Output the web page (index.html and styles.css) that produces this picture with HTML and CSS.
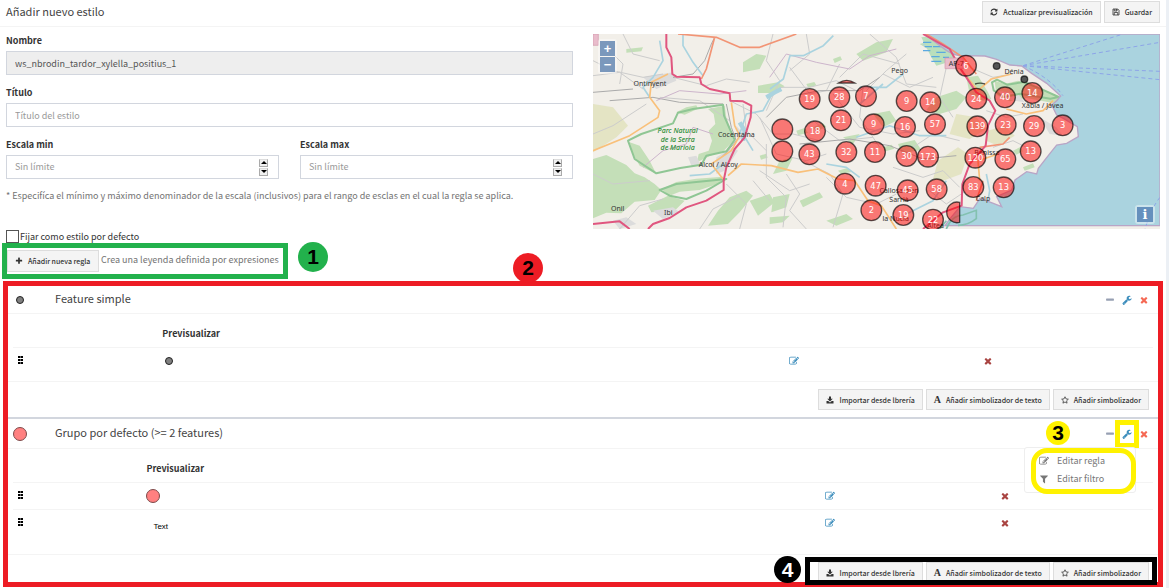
FILE: index.html
```html
<!DOCTYPE html>
<html lang="es">
<head>
<meta charset="utf-8">
<title>Añadir nuevo estilo</title>
<link rel="stylesheet" href="styles.css">
</head>
<body>
<svg class="defs" aria-hidden="true">
  <symbol id="i-refresh" viewBox="0 0 1792 1792"><path d="M1639 1056q0 5-1 7-64 268-268 434.5t-478 166.5q-146 0-282.5-55t-243.5-157l-129 129q-19 19-45 19t-45-19-19-45v-448q0-26 19-45t45-19h448q26 0 45 19t19 45-19 45l-137 137q71 66 161 102t187 36q134 0 250-65t186-179q11-17 53-117 8-23 30-23h192q13 0 22.5 9.5t9.5 22.5zm25-800v448q0 26-19 45t-45 19h-448q-26 0-45-19t-19-45 19-45l138-138q-148-137-349-137-134 0-250 65t-186 179q-11 17-53 117-8 23-30 23h-199q-13 0-22.5-9.5t-9.5-22.5v-7q65-268 270-434.5t480-166.5q146 0 284 55.5t245 156.5l130-129q19-19 45-19t45 19 19 45z"/></symbol>
  <symbol id="i-save" viewBox="0 0 16 16"><path fill="none" stroke="currentColor" stroke-width="1.6" d="M2 2h9.500l2.500 2.500v9.500h-12zM4.500 14v-5h7v5M4.500 2v4h5.500v-4"/><path d="M7.500 2h2v3h-2z"/></symbol>
  <symbol id="i-plus" viewBox="0 0 1792 1792"><path d="M1600 736v192q0 40-28 68t-68 28h-416v416q0 40-28 68t-68 28h-192q-40 0-68-28t-28-68v-416h-416q-40 0-68-28t-28-68v-192q0-40 28-68t68-28h416v-416q0-40 28-68t68-28h192q40 0 68 28t28 68v416h416q40 0 68 28t28 68z"/></symbol>
  <symbol id="i-minus" viewBox="0 0 1792 1792"><path d="M1600 736v192q0 40-28 68t-68 28h-1216q-40 0-68-28t-28-68v-192q0-40 28-68t68-28h1216q40 0 68 28t28 68z"/></symbol>
  <symbol id="i-close" viewBox="0 0 1792 1792"><path d="M1490 1322q0 40-28 68l-136 136q-28 28-68 28t-68-28l-294-294-294 294q-28 28-68 28t-68-28l-136-136q-28-28-28-68t28-68l294-294-294-294q-28-28-28-68t28-68l136-136q28-28 68-28t68 28l294 294 294-294q28-28 68-28t68 28l136 136q28 28 28 68t-28 68l-294 294 294 294q28 28 28 68z"/></symbol>
  <symbol id="i-wrench" viewBox="0 0 1792 1792"><path d="M448 1472q0-26-19-45t-45-19-45 19-19 45 19 45 45 19 45-19 19-45zm644-420l-682 682q-37 37-90 37-52 0-91-37l-106-108q-38-36-38-90 0-53 38-91l681-681q39 98 114.5 173.500t173.500 114.500zm634-435q0 39-23 106-47 134-164.500 217.500t-258.500 83.500q-185 0-316.500-131.500t-131.500-316.500 131.500-316.500 316.500-131.500q58 0 121.500 16.500t107.500 46.500q16 11 16 28t-16 28l-293 169v224l193 107q5-3 79-48.500t135.500-81 70.500-35.500q15 0 23.500 10t8.500 25z"/></symbol>
  <symbol id="i-edit" viewBox="0 0 1792 1792"><path d="M888 1184l116-116-152-152-116 116v56h96v96h56zm440-720q-16-16-33 1l-350 350q-17 17-1 33t33-1l350-350q17-17 1-33zm80 594v190q0 119-84.500 203.500t-203.500 84.500h-832q-119 0-203.500-84.500t-84.500-203.500v-832q0-119 84.500-203.500t203.500-84.500h832q63 0 117 25 15 7 18 23 3 17-9 29l-49 49q-14 14-32 8-23-6-45-6h-832q-66 0-113 47t-47 113v832q0 66 47 113t113 47h832q66 0 113-47t47-113v-126q0-13 9-22l64-64q15-15 35-7t20 29zm-96-738l288 288-672 672h-288v-288zm444 132l-92 92-288-288 92-92q28-28 68-28t68 28l152 152q28 28 28 68t-28 68z"/></symbol>
  <symbol id="i-filter" viewBox="0 0 1792 1792"><path d="M1595 295q17 41-14 70l-493 493v742q0 42-39 59-13 5-25 5-27 0-45-19l-256-256q-19-19-19-45v-486l-493-493q-31-29-14-70 17-39 59-39h1280q42 0 59 39z"/></symbol>
  <symbol id="i-download" viewBox="0 0 16 16"><path d="M6 1h4v4.500h3.500L8 11 2.500 5.500H6zM1 10h3.500L8 13l3.500-3H15v5H1z"/></symbol>
  <symbol id="i-star" viewBox="0 0 16 16"><path fill="none" stroke="currentColor" stroke-width="1.5" stroke-linejoin="round" d="M8 1.500l2 4.300 4.700.6-3.500 3.200.9 4.700L8 12l-4.100 2.300.9-4.700L1.300 6.400 6 5.800z"/></symbol>
  <symbol id="i-grip" viewBox="0 0 5 9"><path d="M0 0h2v2H0zM3 0h2v2H3zM0 3h2v2H0zM3 3h2v2H3zM0 6h2v2H0zM3 6h2v2H3z"/><path opacity=".6" d="M2 0h1v2H2zM2 3h1v2H2zM2 6h1v2H2z"/></symbol>
</svg>

<main class="card">
  <header class="card-head">
    <h1>Añadir nuevo estilo</h1>
    <div class="head-actions">
      <button class="btn" type="button"><svg class="icon"><use href="#i-refresh"/></svg>Actualizar previsualización</button>
      <button class="btn" type="button"><svg class="icon"><use href="#i-save"/></svg>Guardar</button>
    </div>
  </header>

  <div class="top">
    <form class="form">
      <div class="group">
        <label for="name">Nombre</label>
        <input class="field" id="name" type="text" value="ws_nbrodin_tardor_xylella_positius_1" readonly>
      </div>
      <div class="group">
        <label for="title">Título</label>
        <input class="field" id="title" type="text" placeholder="Título del estilo">
      </div>
      <div class="scales">
        <div class="group">
          <label for="min">Escala min</label>
          <div class="field spin-field"><input id="min" type="number" placeholder="Sin límite"><span class="spin"><button type="button" aria-label="Subir mínimo"></button><button type="button" class="down" aria-label="Bajar mínimo"></button></span></div>
        </div>
        <div class="group">
          <label for="max">Escala max</label>
          <div class="field spin-field"><input id="max" type="number" placeholder="Sin límite"><span class="spin"><button type="button" aria-label="Subir máximo"></button><button type="button" class="down" aria-label="Bajar máximo"></button></span></div>
        </div>
      </div>
      <p class="hint">* Especifíca el mínimo y máximo denominador de la escala (inclusivos) para el rango de esclas en el cual la regla se aplica.</p>
      <div class="check"><input id="default" type="checkbox"><label for="default">Fijar como estilo por defecto</label></div>
    </form>

    <div class="map">
      <svg class="map-canvas" viewBox="0 0 1701 585" role="img" aria-label="Mapa de previsualización">
        <rect class="land" width="1701" height="585"/>
        <!-- woodland -->
        <g class="wood">
          <path d="M0 375l40-12 60 30 25 25 30 12 30 20 20 18-20 30-60 5-40 35-45-2-60 25z"/>
          <path d="M165 515l60-30 50 15-30 30-70 5zM205 466l45-22 60-10 80-6-10 20-60 20-60 5-30 12zM410 490l50-20 20 15-40 50-35 35-60 5 30-45zM470 500l60-20 15 25-50 40z"/>
          <path d="M250 235l30-15 30-6 5 10-40 18zM345 225l50-10 5 35 22 70-30 30-40 15-40 20 5-25 30-10 10-30-10-30 20-20-5-30zM110 325l30 10 30 45 20 40-50-25-20-35z"/>
          <path d="M450 85l40-25 30 5-20 40-50 10zM495 155l60-10 20 12-40 20-40 0zM560 380l40-10-20 40-40 10zM100 45l50-5-5 12-45 4zM790 60l60-35 50-10-20 40-70 25zM840 240l50-10 20 30-40 20zM980 30l60-18 25 20-50 20z"/>
          <path d="M540 490l50-10-10 40-45 15zM620 500l60-25 10 15-60 30zM530 550l60-5-20 20-40 5zM700 560l60-20 20 15-50 20zM915 330l50-12 20 30-60 10zM750 310l50-10-20 30z"/>
          <path d="M610 290l25-8 10 14-30 8zM660 280l30-12 10 10-30 14zM720 75l22-8 5 10-22 10zM735 410l28-8 12 12-30 6zM1260 350l20-10 10 12-20 10zM1290 400l30-12 5 12-30 10zM500 365l20-6 4 12-20 6zM640 150l24-6 6 10-24 8zM870 340l26-8 8 12-26 8z"/>
          <path d="M1030 190l60-20 30 20-30 35-50 15-40-12zM1120 130l35-5 30 50 10 20-25 5-40-20zM1205 140l30 10 40-10 60 20 70 35-25 12-80-15-50 10-40-20z"/>
        </g>
        <g class="heath"><path d="M0 210l60 10 45 55-35 35-70 45zM1035 380l60-40 30 20-20 60-55 20-30-5zM1090 240l60 10 30 35-50 30-60-15zM1185 290l50-15 30 30-50 30-35-15z"/></g>
        <g class="urban"><path d="M150 130l90-15 10 25-60 25zM180 530l60-10 20 15-50 20zM370 370l50-30 15 10-40 60-25 10zM285 370l25-5 12 25-25 10zM430 275l25 30-20 15zM60 560l40-10 30 20-50 15zM1215 170l60 10 20 25-60-10zM1340 250l50 30 20 25-40-5zM1200 520l50-15 40 5-60 20z"/></g>
        <!-- minor roads -->
        <g class="minor">
          <path d="M0 80l60 30 90 20 60-10M0 125l80-10 70 50M30 30l60 60-10 60M90 0l30 60 80 20M240 130l100 25 60-20 70 10M200 190l120 10 90 60M0 300l60-25 100-65M410 200l80 40 50 60 60 0 80 20M450 210l10 80 60 60M500 250l50 110 90 20 60-20M540 0l-20 80 40 60-40 90M560 160l90 0 80-20 60 30M590 100l60 80 50-10 40-80M640 0l10 60-60 50M520 330l0 100 60 60-10 90M580 420l40 60-30 50 50 55M630 380l80 40 40 60-30 100M700 430l60 60 90 20 60-30M740 130l70-70 110 30M870 120l80 40 70-30M830 0l80 70 30 80 90 10M940 60l-60 50-60 60M960 340l60-40 80 20M900 400l90 30 60-20 50 50M1010 470l50 40 60-40M660 260l80 60 100-10M720 180l80 100 100 20 80-10M810 160l-10 90 60 90M1060 100l-20 90 40 60M1130 100l70 30 60-10M1180 230l60 20 50-10M1200 340l60-20 60 30"/>
          <path d="M0 420l60 30 110-10M80 585l60-70 70-20M320 585l40-60 80-40M400 450l60 60-20 75M480 440l50 60M500 410l90 60 60-20"/>
        </g>
        <g class="rail"><path d="M0 175l120-10M50 200l130-10 80 15 130 5M240 130l60-10 35-40 20-50 10-20M400 210l15 70 15 40-25 30-20 20M520 250l60-60 100-20 120 0 60-40M620 330l150-15 120 20 100 40 100-10"/></g>
        <g class="border"><path d="M190 200l70-30 120 10 80-10M150 400l60-50 70-20 20-50 60 20M530 130l50-70 90 25 100 20 60-40 80-20"/></g>
        <!-- park limits -->
        <g class="park">
          <path d="M105 320L145 300 240 268 255 236 300 225 390 212 393 245 425 318 400 352 340 365 325 392 262 402 190 418 125 375z"/>
          <path d="M200 468L250 450 400 435 340 470 280 495 230 485zM1197 145l15-8 30 15 50-8 50 20 55 25-25 5-90-15-50 10-30-20z"/>
        </g>
        <!-- rivers and reservoirs -->
        <g class="river">
          <path d="M170 190l-20-30 30-30 30-50-10-60M330 125l-30-40-30-50 0-35M440 300l20-60 50-10 30-55M450 300l30 50M290 425l60-5 40-30M531 165l40-30 20-70 40 0 60-30 30-30M990 30l40 20M800 160l80 0 50-40M870 150l-70 60M700 390l60 10 40 30M790 310l100-35 90 30 80 0M1060 440l-40 60-80 40M1180 420l10 50-10 60"/>
          <path class="wide" d="M520 190l25-15 20-10M440 265l15 25-5 30"/>
        </g>
        <!-- sea and wetland -->
        <path class="marsh" d="M985 10l40-5 60 45-5 30-50 15-15-25z"/>
        <path class="marsh-lines" d="M990 25h25M995 38h22M1020 38h25M990 50h22M1030 55h28M1015 68h25M1050 70h18M1015 82h30"/>
        <path class="sea" d="M996 0q30 25 65 50 30 18 55 15l60 1 35 10 40 17 35 3 30 22 45 30 42 38-12 14-15 13 15 30 20 10 42 25 3 30-35 20-30 5-20 25-35 45-5 17-30-7-35 25-10 30-45 20 15 30-25-10-40-15-20 30-40-5-25 30-20 27H1701V0z"/>
        <path class="marine" d="M1060 585q15-40 50-42l40-14v25q-25 20-55 20M1060 560l-20 25"/>
        <g class="ferry"><path d="M1290 95L1590 0M1290 95L1701 25M1290 95L1701 112M1290 95L1701 137M1290 95Q1370 130 1410 185M1701 490q-25 30-45 95"/></g>
        <!-- highways -->
        <g class="second"><path d="M0 350l110-45 85-55 5-20-30-40 5-45 50-25M415 205l10 70 15 30-25 45-60 40 35 45M405 425l40-35 90 5 80 20 60-10 60 30 50 5 40 60 40 15 45 70M1115 120l40 50 40-35 60-15M1240 225l60 15 50-10 30-30M1160 440l-5-60 60-20"/></g>
        <g class="first"><path d="M255 0l115 10 70 30 60 0 110-40M365 10l-25 95-15 30M1000 0l50 30 60 40 40 50M1160 340l70-10 20-20M1150 500l20-60"/></g>
        <g class="motor"><path d="M220 0V40L235 70 238 120 250 128 320 130 325 150 350 165 410 178 412 200 450 202 475 215 473 250 455 310 425 345 400 400 392 440 392 468 340 500 280 520 230 552 180 570 165 585M0 570L80 562 110 585M990 0L1070 45 1100 100 1150 175 1190 200 1207 230 1185 275 1178 335 1130 390 1108 450 1106 515 1050 535 990 585"/></g>
        <g class="shield"><path d="M0 0h16v34H0zM1056 72h55v32h-55z"/></g>
        <!-- place names -->
        <g class="place">
          <text x="171" y="156">Ontinyent</text><text x="430" y="308">Cocentaina</text><text x="376" y="398">Alcoi / Alcoy</text><text x="74" y="531">Onil</text><text x="226" y="544">Ibi</text><text x="920" y="117">Pego</text><text x="1263" y="119">Dénia</text><text x="1349" y="221">Xàbia / Jávea</text><text x="1182" y="362">Benissa</text><text x="1170" y="502">Calp</text><text x="918" y="478">Callosa d'en</text><text x="918" y="504">Sarrià</text><text x="908" y="562">la Nucia</text><text x="1028" y="582">Altea</text><text x="1090" y="95">AP-7</text>
        </g>
        <g class="park-name"><text x="254" y="298">Parc Natural</text><text x="254" y="323">de la Serra</text><text x="254" y="348">de Mariola</text></g>
        <!-- clusters -->
        <g class="cluster" transform="translate(531 -12)">
          <path d="M205 159q25-16 50 0zM569 517a31 31 0 1 0 0 60z"/>
          <circle cx="37" cy="298" r="31"/><circle cx="37" cy="364" r="31"/>
          <circle cx="119" cy="207" r="31"/><text x="119" y="216">19</text>
          <circle cx="208" cy="202" r="31"/><text x="208" y="211">28</text>
          <circle cx="288" cy="199" r="31"/><text x="288" y="208">7</text>
          <circle cx="410" cy="213" r="31"/><text x="410" y="222">9</text>
          <circle cx="481" cy="217" r="31"/><text x="481" y="226">14</text>
          <circle cx="213" cy="271" r="31"/><text x="213" y="280">21</text>
          <circle cx="135" cy="304" r="31"/><text x="135" y="313">18</text>
          <circle cx="311" cy="283" r="31"/><text x="311" y="292">9</text>
          <circle cx="405" cy="291" r="31"/><text x="405" y="300">16</text>
          <circle cx="495" cy="283" r="31"/><text x="495" y="292">57</text>
          <circle cx="229" cy="366" r="31"/><text x="229" y="375">32</text>
          <circle cx="315" cy="366" r="31"/><text x="315" y="375">11</text>
          <circle cx="118" cy="373" r="31"/><text x="118" y="382">43</text>
          <circle cx="410" cy="378" r="31"/><text x="410" y="387">30</text>
          <circle cx="474" cy="380" r="31"/><text x="474" y="389">173</text>
          <circle cx="225" cy="461" r="31"/><text x="225" y="470">4</text>
          <circle cx="317" cy="467" r="31"/><text x="317" y="476">47</text>
          <circle cx="413" cy="481" r="31"/><text x="413" y="490">45</text>
          <circle cx="500" cy="478" r="31"/><text x="500" y="487">58</text>
          <circle cx="304" cy="541" r="31"/><text x="304" y="550">2</text>
          <circle cx="400" cy="555" r="31"/><text x="400" y="564">19</text>
          <circle cx="489" cy="569" r="31"/><text x="489" y="578">22</text>
        </g>
        <g class="cluster" transform="translate(1101 -12)">
          <circle cx="18" cy="107" r="31"/><text x="18" y="116">6</text>
          <circle cx="49" cy="206" r="31"/><text x="49" y="215">24</text>
          <circle cx="135" cy="202" r="31"/><text x="135" y="211">40</text>
          <circle cx="217" cy="189" r="31"/><text x="217" y="198">14</text>
          <circle cx="52" cy="289" r="31"/><text x="52" y="298">139</text>
          <circle cx="137" cy="284" r="31"/><text x="137" y="293">23</text>
          <circle cx="222" cy="288" r="31"/><text x="222" y="297">29</text>
          <circle cx="308" cy="286" r="31"/><text x="308" y="295">3</text>
          <circle cx="46" cy="383" r="31"/><text x="46" y="392">120</text>
          <circle cx="136" cy="388" r="31"/><text x="136" y="397">65</text>
          <circle cx="212" cy="364" r="31"/><text x="212" y="373">13</text>
          <circle cx="40" cy="471" r="31"/><text x="40" y="480">83</text>
          <circle cx="131" cy="472" r="31"/><text x="131" y="481">13</text>
          <path class="sliver" d="M45 162q15-5 30 0"/>
          <circle class="single" cx="110" cy="108" r="10"/><circle class="single" cx="193" cy="148" r="10"/>
        </g>
      </svg>
      <div class="zoom"><button type="button">+</button><button type="button">−</button></div>
      <div class="info"><button type="button">i</button></div>
    </div>
  </div>

  <div class="rule-bar">
    <button class="btn" type="button"><svg class="icon"><use href="#i-plus"/></svg>Añadir nueva regla</button>
    <span>Crea una leyenda definida por expresiones</span>
    <span class="badge badge-1">1</span>
  </div>

  <div class="rules">
    <span class="badge badge-2">2</span>
    <section class="rule">
      <header class="rule-head">
        <span class="symbol"><span class="dot"></span></span>
        <h2>Feature simple</h2>
        <div class="tools">
          <button type="button" aria-label="Contraer"><svg class="icon"><use href="#i-minus"/></svg></button>
          <button type="button" class="blue" aria-label="Opciones"><svg class="icon"><use href="#i-wrench"/></svg></button>
          <button type="button" class="red" aria-label="Eliminar"><svg class="icon"><use href="#i-close"/></svg></button>
        </div>
      </header>
      <div class="rule-body">
        <table class="table-simple">
          <thead><tr><th class="c1"></th><th class="c2">Previsualizar</th><th class="c3"></th><th></th></tr></thead>
          <tbody><tr>
            <td><svg class="grip"><use href="#i-grip"/></svg></td><td><span class="dot"></span></td>
            <td><a class="edit" href="#" aria-label="Editar"><svg class="icon"><use href="#i-edit"/></svg></a></td>
            <td><a class="remove" href="#" aria-label="Eliminar"><svg class="icon"><use href="#i-close"/></svg></a></td>
          </tr></tbody>
        </table>
      </div>
      <footer class="actions">
        <button class="btn" type="button"><svg class="icon"><use href="#i-download"/></svg>Importar desde lbrería</button>
        <button class="btn" type="button"><b class="letter">A</b>Añadir simbolizador de texto</button>
        <button class="btn" type="button"><svg class="icon"><use href="#i-star"/></svg>Añadir simbolizador</button>
      </footer>
    </section>

    <section class="rule">
      <header class="rule-head">
        <span class="symbol"><span class="dot big"></span></span>
        <h2>Grupo por defecto (&gt;= 2 features)</h2>
        <div class="tools">
          <button type="button" aria-label="Contraer"><svg class="icon"><use href="#i-minus"/></svg></button>
          <button type="button" class="blue marked" aria-label="Opciones"><svg class="icon"><use href="#i-wrench"/></svg></button>
          <button type="button" class="red" aria-label="Eliminar"><svg class="icon"><use href="#i-close"/></svg></button>
        </div>
        <span class="badge badge-3">3</span>
        <div class="menu">
          <a href="#"><svg class="icon"><use href="#i-edit"/></svg>Editar regla</a>
          <a href="#"><svg class="icon"><use href="#i-filter"/></svg>Editar filtro</a>
        </div>
      </header>
      <div class="rule-body">
        <table class="table-group">
          <thead><tr><th class="c1"></th><th class="c2">Previsualizar</th><th class="c3"></th><th></th></tr></thead>
          <tbody><tr>
            <td><svg class="grip"><use href="#i-grip"/></svg></td><td><span class="dot big"></span></td>
            <td><a class="edit" href="#" aria-label="Editar"><svg class="icon"><use href="#i-edit"/></svg></a></td>
            <td><a class="remove" href="#" aria-label="Eliminar"><svg class="icon"><use href="#i-close"/></svg></a></td>
          </tr><tr>
            <td><svg class="grip"><use href="#i-grip"/></svg></td><td><span class="sample">Text</span></td>
            <td><a class="edit" href="#" aria-label="Editar"><svg class="icon"><use href="#i-edit"/></svg></a></td>
            <td><a class="remove" href="#" aria-label="Eliminar"><svg class="icon"><use href="#i-close"/></svg></a></td>
          </tr></tbody>
        </table>
      </div>
      <footer class="actions framed">
        <button class="btn" type="button"><svg class="icon"><use href="#i-download"/></svg>Importar desde lbrería</button>
        <button class="btn" type="button"><b class="letter">A</b>Añadir simbolizador de texto</button>
        <button class="btn" type="button"><svg class="icon"><use href="#i-star"/></svg>Añadir simbolizador</button>
        <span class="frame"></span>
        <span class="badge badge-4">4</span>
      </footer>
    </section>
  </div>
</main>
</body>
</html>
```

FILE: styles.css
```css
* { box-sizing: border-box; }
body {
  margin: 0;
  background: #ecf0f5;
  color: #333;
  font: 9px/14px "Noto Sans CJK SC", "Open Sans", sans-serif;
}
button, input { font: inherit; color: inherit; }
h1, h2, p { margin: 0; font-weight: 400; }
a { color: inherit; text-decoration: none; }
.defs { position: absolute; width: 0; height: 0; }
.icon { width: 10px; height: 10px; fill: currentColor; flex: none; display: block; }

.card { background: #fff; margin-right: 3px; padding-bottom: 1px; }
.card-head {
  display: flex; align-items: center; justify-content: space-between;
  height: 27px; padding: 0 6px; border-bottom: 1px solid #f4f4f4;
}
h1, h2 { font-size: 11px; line-height: 18px; color: #444; }
.card-head h1 { padding-bottom: 5px; }
.head-actions { display: flex; gap: 3px; padding-bottom: 2px; }
.btn {
  display: flex; align-items: center; gap: 5px;
  height: 22px; padding: 0 7px;
  background: #f4f4f4; border: 1px solid #ddd; color: #333;
  font-size: 7px; line-height: 12px; font-weight: 500; white-space: nowrap;
}
.btn .icon { width: 8px; height: 8px; }

.top { display: grid; grid-template-columns: 1fr 1fr; gap: 20px; padding: 7px 6px 0; }
.form label { font-weight: 700; }
.group { display: flex; flex-direction: column; gap: 3px; margin-bottom: 11px; }
.field {
  width: 100%; height: 24px; padding: 0 8px;
  border: 1px solid #d2d6de; background: #fff; color: #555;
}
.field[readonly] { background: #eee; }
input::placeholder { color: #999; opacity: 1; }
.scales { display: grid; grid-template-columns: 1fr 1fr; gap: 21px; }
.scales .group { margin-bottom: 10px; }
.spin-field { display: flex; align-items: center; padding-right: 10px; }
.spin-field input {
  flex: 1; min-width: 0; padding: 0; border: 0; background: none;
  appearance: textfield; -moz-appearance: textfield;
}
.spin-field input::-webkit-inner-spin-button { appearance: none; -webkit-appearance: none; margin: 0; }
.spin { display: grid; gap: 1px; width: 9px; }
.spin button {
  display: flex; align-items: center; justify-content: center;
  height: 8px; padding: 0; background: #f0f0f0; border: 1px solid #aaa; border-top-color: #ddd;
}
.spin button::after { content: ""; border: 3px solid transparent; border-top: 0; border-bottom-color: #000; }
.spin .down::after { border-top: 3px solid #000; border-bottom: 0; }
.hint { color: #737373; white-space: nowrap; }
.check { display: flex; align-items: center; gap: 1px; margin-top: 27px; }
.check input {
  appearance: none; width: 13px; height: 13px; margin: 0;
  border: 1px solid #555; background: #fff;
}
.check label { font-weight: 400; line-height: 13px; }

.map { position: relative; }
.map-canvas { display: block; width: 100%; }
.land { fill: #f2efe9; }
.wood { fill: #c4dfb8; }
.heath { fill: #d6d99f; opacity: .5; }
.urban { fill: #dcdcdc; }
.minor, .rail, .border, .park, .river, .ferry, .second, .first, .motor { fill: none; stroke-linejoin: round; }
.minor { stroke: #ccc; stroke-width: 3; }
.rail { stroke: #aaa; stroke-width: 3; }
.border { stroke: #cdb5cc; stroke-width: 3; }
.park { stroke: #8fc694; stroke-width: 6; }
.river { stroke: #aad3df; stroke-width: 5; }
.river .wide { stroke-width: 13; }
.marsh { fill: #b9dfbc; }
.marsh-lines { stroke: #5aa9e0; stroke-width: 4; }
.sea { fill: #aad3df; stroke: #b9a5c6; stroke-width: 4; }
.marine { fill: none; stroke: #83c1b0; stroke-width: 5; }
.ferry { stroke: #8da5e8; stroke-width: 3; stroke-dasharray: 12 9; }
.second { stroke: #f9c07a; stroke-width: 5; }
.first { stroke: #f29475; stroke-width: 5; }
.motor { stroke: #e0567f; stroke-width: 6; }
.shield { fill: #e9bccb; stroke: #d199ad; stroke-width: 2; }
.place text, .park-name text, .cluster text { text-anchor: middle; font-family: "Noto Sans", sans-serif; font-size: 21px; }
.place text { fill: #333; }
.park-name text { fill: #2b8c35; font-style: italic; font-weight: 500; }
.cluster circle, .cluster path { fill: #ff0000; fill-opacity: .5; stroke: #000; stroke-opacity: .65; stroke-width: 4; }
.cluster .single { fill: #555; fill-opacity: 1; }
.cluster .sliver { fill: none; }
.cluster text { fill: #fff; font-family: "DejaVu Sans", sans-serif; font-size: 25px; }
.zoom, .info { position: absolute; padding: 2px; background: rgba(255, 255, 255, .4); border-radius: 3px; }
.zoom { top: 5px; left: 5px; display: grid; gap: 1px; }
.info { right: 5px; bottom: 5px; }
.map { align-self: start; }
.zoom button, .info button {
  display: block; width: 15px; height: 15px; padding: 0; border: 0;
  background: #7b98bc; color: #fff; font: 700 13px/14px "Liberation Sans", sans-serif;
}
.info button { width: 16px; background: #6590bd; font-family: "DejaVu Serif", serif; }

.rule-bar {
  position: relative; display: flex; align-items: flex-start; gap: 2px;
  width: max-content; min-width: 286px; height: 36px;
  margin: 0 0 2px 2px; padding-top: 2px;
  border: 5px solid #22b14c; color: #737373;
}
.rule-bar .btn { min-width: 92px; }
.rule-bar span { padding-top: 3px; }
.badge {
  position: absolute; display: grid; place-items: center;
  width: 30px; height: 30px; border-radius: 50%; color: #000;
  font: 700 21px/24px "Liberation Sans", sans-serif;
}
.rule-bar .badge { padding: 0; }
.badge-1 { left: 291px; top: -6px; background: #22b14c; }
.badge-2 { left: 505px; top: -33px; background: #ed1c24; }
.badge-3 { right: 88px; top: 2px; width: 24px; height: 24px; background: #fff200; }
.badge-4 { right: 357px; top: 1px; width: 27px; height: 27px; background: #000; color: #fff; }

.rules { position: relative; margin: 0 3px; border: 5px solid #ed1c24; height: 306px; }
.rule + .rule { border-top: 2px solid #d2d6de; }
.rule-head {
  position: relative; display: flex; align-items: center;
  height: 28px; padding: 0 9px 0 5px; border-bottom: 1px solid #f4f4f4;
}
.rule + .rule .rule-head { height: 30px; }
.rule-head h2 { flex: 1; padding-bottom: 3px; }
.symbol { width: 42px; padding-left: 0; }
.dot { display: block; width: 8px; height: 8px; margin-left: 3px; border: 1px solid #222; border-radius: 50%; background: #808080; }
.dot.big { width: 14px; height: 14px; margin-left: 0; border-color: #7d4a4a; background: #ff8080; }
.tools { display: flex; align-items: center; gap: 7px; }
.tools button { padding: 0; border: 0; background: none; color: #97a0b3; }
.tools .blue { position: relative; color: #3c8dbc; }
.tools .red { color: #f56954; }
.tools .marked::after { content: ""; position: absolute; inset: -9px -7px; border: 5px solid #fff200; }
.menu {
  position: absolute; right: 22px; top: 28px; width: 112px; padding: 4px 14px;
  background: #fff; border: 1px solid #eee; border-radius: 3px; color: #777; z-index: 1;
}
.menu::after { content: ""; position: absolute; inset: 0 -1px -2px 6px; border: 5px solid #fff200; border-radius: 16px; }
.menu a { display: flex; align-items: center; gap: 8px; height: 18px; }

.rule-body { padding: 5px 5px 7px; border-bottom: 1px solid #f4f4f4; }
.table-group { margin-bottom: 11px; }
table { width: 100%; border-collapse: collapse; table-layout: fixed; }
th { height: 28px; padding: 2px 8px 0; text-align: left; font-weight: 700; }
td { height: 27px; padding: 0 8px; border-top: 1px solid #f4f4f4; }
td:first-child { padding: 0 5px; }
.table-simple .c1 { width: 12.4%; }
.table-simple .c2 { width: 55%; }
.table-simple .c3 { width: 17%; }
.table-group .c1 { width: 11%; }
.table-group .c2 { width: 59.5%; }
.table-group .c3 { width: 15.4%; }
.grip { display: block; width: 5px; height: 9px; }
.sample { display: block; padding: 8px 0 0 7px; color: #000; font: 8px/12px "Liberation Sans", sans-serif; }
.edit { color: #3c8dbc; }
.remove { color: #a94442; }
.actions { position: relative; display: flex; justify-content: flex-end; gap: 3px; padding: 7px 9px; }
.actions .btn { height: 21px; }
.letter { font: 700 10px/12px "Liberation Serif", serif; }
.frame { position: absolute; top: 2px; right: 1px; width: 352px; height: 28px; border: 5px solid #000; }
```
